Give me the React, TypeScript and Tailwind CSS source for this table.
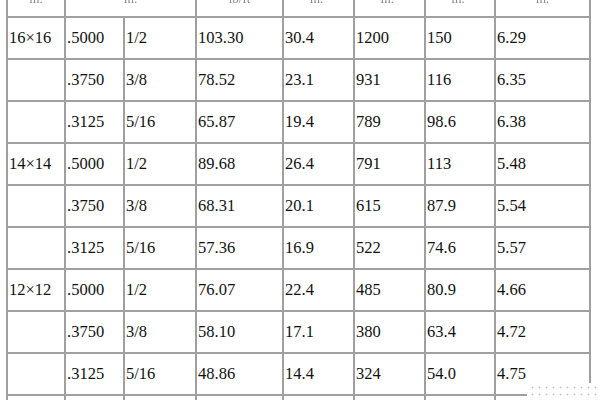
import * as React from 'react';

const headers = [
  { label: 'in.', span: 1 },
  { label: 'in.', span: 2 },
  { label: 'lb/ft', span: 1 },
  { label: 'in.²', span: 1 },
  { label: 'in.⁴', span: 1 },
  { label: 'in.³', span: 1 },
  { label: 'in.', span: 1 },
];

const rows = [
  ['16×16', '.5000', '1/2', '103.30', '30.4', '1200', '150', '6.29'],
  ['', '.3750', '3/8', '78.52', '23.1', '931', '116', '6.35'],
  ['', '.3125', '5/16', '65.87', '19.4', '789', '98.6', '6.38'],
  ['14×14', '.5000', '1/2', '89.68', '26.4', '791', '113', '5.48'],
  ['', '.3750', '3/8', '68.31', '20.1', '615', '87.9', '5.54'],
  ['', '.3125', '5/16', '57.36', '16.9', '522', '74.6', '5.57'],
  ['12×12', '.5000', '1/2', '76.07', '22.4', '485', '80.9', '4.66'],
  ['', '.3750', '3/8', '58.10', '17.1', '380', '63.4', '4.72'],
  ['', '.3125', '5/16', '48.86', '14.4', '324', '54.0', '4.75'],
  ['', '', '', '', '', '', '', ''],
];

const widths = [58, 59, 72, 87, 71, 71, 70, 95];

export default function App() {
  return (
    <div className="relative w-[600px] h-[400px] overflow-hidden bg-white [font-family:'Liberation_Serif','Times_New_Roman',serif] text-[16.5px] text-[#111]">
      <table className="ml-[6px] -mt-[26px] border-collapse table-fixed border-2 border-[#a0a0a0]">
        <colgroup>
          {widths.map((w, i) => (
            <col key={i} style={{ width: w }} />
          ))}
        </colgroup>
        <thead>
          <tr className="h-[42px]">
            {headers.map((h, i) => (
              <th
                key={i}
                colSpan={h.span}
                className="border-2 border-[#a0a0a0] text-center align-bottom pb-[11px] leading-none font-normal text-[13px] text-[#8a8a8a] blur-[0.5px]"
              >
                {h.label}
              </th>
            ))}
          </tr>
        </thead>
        <tbody>
          {rows.map((row, r) => (
            <tr key={r} className="h-[42px]">
              {row.map((cell, c) => (
                <td
                  key={c}
                  className="border-2 border-[#a0a0a0] pl-[1px] align-middle leading-none whitespace-nowrap"
                >
                  {cell}
                </td>
              ))}
            </tr>
          ))}
        </tbody>
      </table>
      <div className="absolute left-[527px] top-[383px] w-[73px] h-[17px] bg-white bg-[radial-gradient(circle,#bdbdbd_0.8px,transparent_1.1px)] bg-[length:7px_7px] bg-[position:2px_1px]" />
    </div>
  );
}
